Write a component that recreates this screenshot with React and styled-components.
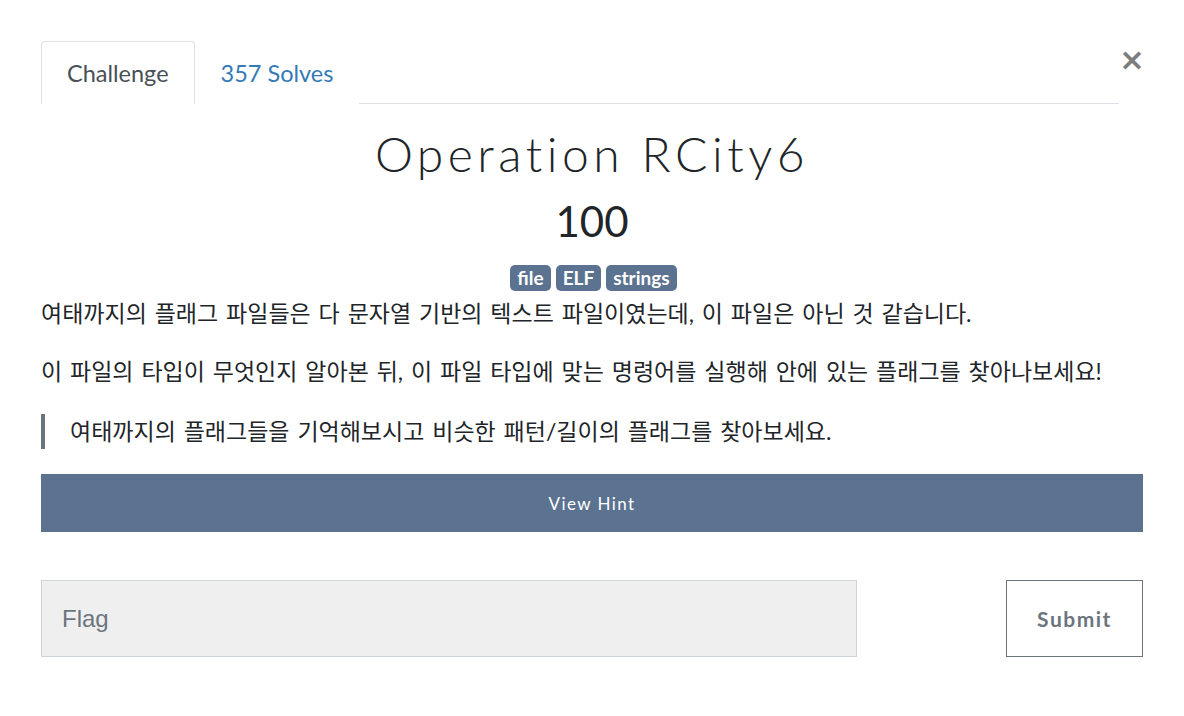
import styled, { createGlobalStyle } from "styled-components";

const GlobalStyle = createGlobalStyle`
  body {
    margin: 0;
    background: #fff;
    color: #212529;
    font-family: Lato, "Noto Sans CJK KR", sans-serif;
  }
`;

const tags = ["file", "ELF", "strings"];

function App() {
  return (
    <>
      <GlobalStyle />
      <Wrapper>
        <Header>
          <Tabs>
            <Tab active>Challenge</Tab>
            <Tab>357 Solves</Tab>
          </Tabs>
          <Close>×</Close>
        </Header>
        <Title>Operation RCity6</Title>
        <Value>100</Value>
        <TagRow>
          {tags.map((t) => (
            <Tag key={t}>{t}</Tag>
          ))}
        </TagRow>
        <Description>
          <p>
            여태까지의 플래그 파일들은 다 문자열 기반의 텍스트 파일이였는데, 이
            파일은 아닌 것 같습니다.
          </p>
          <p>
            이 파일의 타입이 무엇인지 알아본 뒤, 이 파일 타입에 맞는 명령어를
            실행해 안에 있는 플래그를 찾아나보세요!
          </p>
          <Quote>
            여태까지의 플래그들을 기억해보시고 비슷한 패턴/길이의 플래그를
            찾아보세요.
          </Quote>
        </Description>
        <HintButton>View Hint</HintButton>
        <SubmitRow>
          <FlagInput placeholder="Flag" />
          <SubmitButton>Submit</SubmitButton>
        </SubmitRow>
      </Wrapper>
    </>
  );
}

export default App;

const Wrapper = styled.div`
  width: 1102px;
  padding: 41px 0 0 41px;
`;

const Header = styled.div`
  display: flex;
  align-items: flex-start;
`;

const Tabs = styled.div`
  flex: 1;
  display: flex;
  border-bottom: 1px solid #dee2e6;
`;

const Tab = styled.div`
  padding: 0 25px;
  height: 61px;
  display: flex;
  align-items: center;
  font-size: 23.5px;
  margin-bottom: -1px;
  border: 1px solid ${(p) => (p.active ? "#dee2e6" : "transparent")};
  border-bottom-color: ${(p) => (p.active ? "#fff" : "transparent")};
  border-radius: 4px 4px 0 0;
  color: ${(p) => (p.active ? "#495057" : "#337ab7")};
  background: #fff;
`;

const Close = styled.div`
  width: 21px;
  margin-top: 3px;
  padding-right: 3px;
  text-align: center;
  font-size: 31px;
  font-weight: 700;
  line-height: 1;
  color: #7d7d7d;
  font-family: "DejaVu Sans", sans-serif;
`;

const Title = styled.h1`
  margin: 22px 0 0;
  text-align: center;
  font-size: 48px;
  font-weight: 300;
  letter-spacing: 4.5px;
  line-height: 56px;
`;

const Value = styled.div`
  margin-top: 15px;
  text-align: center;
  font-size: 42px;
  line-height: 48px;
`;

const TagRow = styled.div`
  display: flex;
  justify-content: center;
  gap: 5px;
  margin-top: 20px;
  padding-left: 3px;
`;

const Tag = styled.span`
  background: #5b7290;
  color: #fff;
  font-weight: 700;
  font-size: 19px;
  line-height: 26px;
  padding: 0 7px;
  border-radius: 5px;
`;

const Description = styled.div`
  font-size: 23px;
  word-spacing: 2px;
  line-height: 34px;
  p {
    margin: 5px 0 24px;
  }
`;

const Quote = styled.blockquote`
  margin: 26px 0 0;
  padding-left: 25px;
  border-left: 4px solid #6c757d;
  line-height: 35px;
`;

const HintButton = styled.button`
  display: block;
  width: 100%;
  margin-top: 25px;
  height: 58px;
  border: none;
  background: #5b7290;
  color: #fff;
  font-family: Lato, sans-serif;
  font-size: 17px;
  letter-spacing: 1.4px;
`;

const SubmitRow = styled.div`
  display: flex;
  justify-content: space-between;
  margin-top: 48px;
`;

const FlagInput = styled.input`
  box-sizing: border-box;
  width: 816px;
  height: 77px;
  background: #efefef;
  border: 1px solid #ced4da;
  padding: 0 20px;
  font-family: "Liberation Sans", Arial, sans-serif;
  font-size: 24px;
  &::placeholder {
    color: #6c757d;
  }
`;

const SubmitButton = styled.button`
  box-sizing: border-box;
  width: 137px;
  height: 77px;
  background: #fff;
  border: 1px solid #6c757d;
  color: #6c757d;
  font-family: Lato, sans-serif;
  font-weight: 700;
  font-size: 21px;
  letter-spacing: 1.5px;
`;
